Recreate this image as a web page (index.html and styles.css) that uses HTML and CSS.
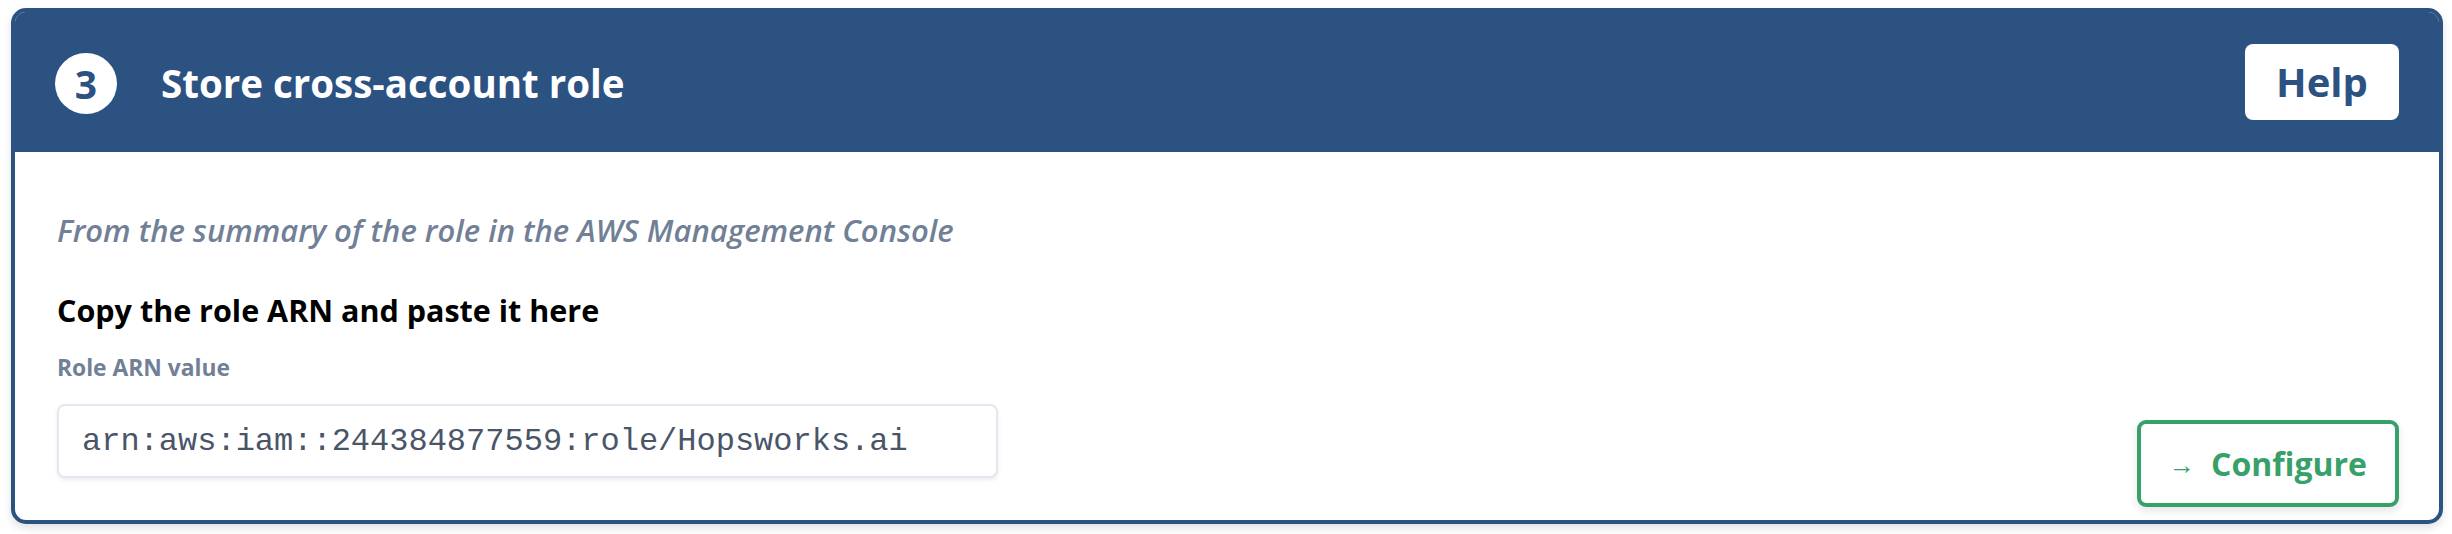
FILE: index.html
```html
<!DOCTYPE html>
<html lang="en">
<head>
<meta charset="utf-8">
<title>Store cross-account role</title>
<link rel="stylesheet" href="styles.css">
</head>
<body>
<section class="card">
  <header class="card-header">
    <div class="step">
      <span class="step-num">3</span>
      <h2 class="step-title">Store cross-account role</h2>
    </div>
    <button class="help-btn" type="button">Help</button>
  </header>
  <div class="card-body">
    <div class="form-col">
      <p class="hint">From the summary of the role in the AWS Management Console</p>
      <h3 class="instruction">Copy the role ARN and paste it here</h3>
      <label class="field-label" for="arn">Role ARN value</label>
      <input class="field-input" id="arn" type="text" value="arn:aws:iam::244384877559:role/Hopsworks.ai">
    </div>
    <button class="configure-btn" type="button"><span class="arrow">→</span>Configure</button>
  </div>
</section>
</body>
</html>
```
FILE: styles.css
```css
* { box-sizing: border-box; }
html, body { background: #ffffff; }
body {
  margin: 0;
  padding: 8px 9px 10px 11px;
  font-family: "Open Sans", "Noto Sans", sans-serif;
}
.card {
  border: 4px solid #2c5282;
  border-radius: 15px;
  overflow: hidden;
  background: #ffffff;
  box-shadow: 0 4px 8px rgba(0, 0, 0, 0.12);
  height: 516px;
  display: flex;
  flex-direction: column;
}
.card-header {
  background: #2c5282;
  height: 140px;
  display: flex;
  align-items: center;
  justify-content: space-between;
  padding: 0 40px 0 40px;
}
.step { display: flex; align-items: center; gap: 44px; padding-top: 2px; }
.step-num {
  width: 62px;
  height: 61px;
  border-radius: 50%;
  background: #ffffff;
  color: #2c5282;
  display: flex;
  align-items: center;
  justify-content: center;
  font-weight: 700;
  font-size: 39px;
  line-height: 1;
}
.step-title {
  margin: 0;
  color: #ffffff;
  font-size: 38.5px;
  font-weight: 700;
  line-height: 1.2;
}
.help-btn {
  width: 154px;
  height: 76px;
  border: none;
  border-radius: 8px;
  background: #ffffff;
  color: #2c5282;
  font-family: inherit;
  font-weight: 700;
  font-size: 40px;
  line-height: 1;
  padding: 0;
}
.card-body {
  flex: 1;
  display: flex;
  justify-content: space-between;
  padding: 58px 40px 13px 42px;
}
.form-col {
  display: flex;
  flex-direction: column;
  align-items: flex-start;
  padding-bottom: 28px;
}
.hint {
  margin: 0;
  color: #718096;
  font-style: italic;
  font-weight: 600;
  font-size: 31px;
  line-height: 40px;
}
.instruction {
  margin: 40px 0 0;
  color: #000000;
  font-weight: 700;
  font-size: 30.5px;
  line-height: 40px;
}
.field-label {
  margin-top: 23px;
  color: #718096;
  font-weight: 700;
  font-size: 22.8px;
  line-height: 30px;
}
.field-input {
  margin-top: 21px;
  width: 941px;
  height: 74px;
  border: 2px solid #e2e8f0;
  border-radius: 8px;
  box-shadow: 0 2px 4px rgba(0, 0, 0, 0.08);
  padding: 0 23px;
  font-family: "Liberation Mono", "DejaVu Sans Mono", monospace;
  font-size: 32px;
  color: #4a5568;
  background: #ffffff;
}
.configure-btn {
  align-self: flex-end;
  width: 262px;
  height: 87px;
  border: 4px solid #38a169;
  border-radius: 9px;
  background: #ffffff;
  color: #38a169;
  font-family: inherit;
  font-weight: 700;
  font-size: 32px;
  line-height: 1;
  padding: 0;
  box-shadow: 0 4px 8px rgba(0, 0, 0, 0.1);
  display: flex;
  align-items: center;
  justify-content: center;
  gap: 16px;
}
.arrow {
  font-weight: 400;
  font-size: 26px;
}
```
